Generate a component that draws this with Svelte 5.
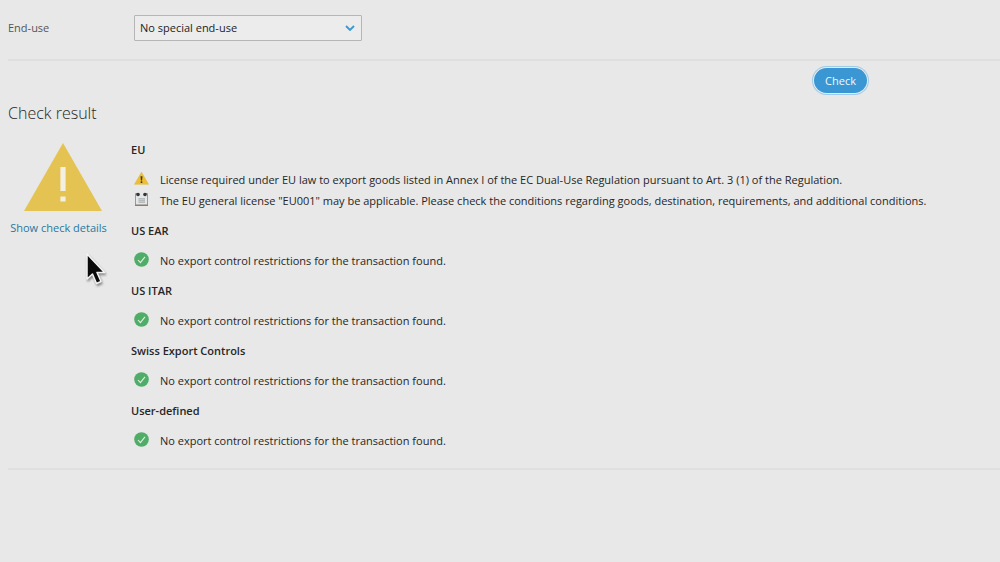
<script>
  const groups = [
    {
      title: 'EU',
      rows: [
        { icon: 'warning', text: 'License required under EU law to export goods listed in Annex I of the EC Dual-Use Regulation pursuant to Art. 3 (1) of the Regulation.' },
        { icon: 'note', text: 'The EU general license "EU001" may be applicable. Please check the conditions regarding goods, destination, requirements, and additional conditions.' }
      ]
    },
    ...['US EAR', 'US ITAR', 'Swiss Export Controls', 'User-defined'].map((title) => ({
      title,
      rows: [{ icon: 'ok', text: 'No export control restrictions for the transaction found.' }]
    }))
  ];
  let endUse = $state('No special end-use');
</script>

<main>
  <form onsubmit={(e) => e.preventDefault()}>
    <div class="field">
      <label for="end-use">End-use</label>
      <div class="select">
        <select id="end-use" bind:value={endUse}>
          <option>No special end-use</option>
        </select>
        <svg class="chevron" viewBox="0 0 10 6" aria-hidden="true">
          <path d="M1 1l4 4 4-4" fill="none" stroke="#3a97cf" stroke-width="1.8" />
        </svg>
      </div>
    </div>
    <div class="actions"><button type="submit">Check</button></div>
  </form>

  <section>
    <h1>Check result</h1>
    <div class="result">
      <aside>
        <svg class="alert" viewBox="0 0 78 68" role="img" aria-label="Warning">
          <path d="M39 0L78 68H0Z" fill="#e5c352" />
          <path d="M36.400 24h5.200v24h-5.200zM36.400 53.500h5.200v5h-5.200z" fill="#f3efe2" />
        </svg>
        <a href="#details">Show check details</a>
      </aside>
      <div class="groups">
        {#each groups as group}
          <div class="group">
            <h2>{group.title}</h2>
            <ul>
              {#each group.rows as row}
                <li>
                  {#if row.icon === 'warning'}
                    <svg viewBox="0 0 15 15" aria-hidden="true">
                      <path d="M7.500 1.200L14.500 13.300H.5Z" fill="#eebf35" stroke="#dfb43a" stroke-width=".5" stroke-linejoin="round" />
                      <path d="M6.500 5.200h2l-.4 4.300H6.900zM6.700 10.300h1.600v1.600H6.700z" fill="#41371d" />
                    </svg>
                  {:else if row.icon === 'note'}
                    <svg viewBox="0 0 15 15" aria-hidden="true">
                      <path d="M1.500 1.500h12v11.500h-12z" fill="#e4e6e7" stroke="#a3978a" />
                      <path d="M1 13.300h13" stroke="#786d61" />
                      <path d="M4.500 6h6.500v5H4.500z" fill="#b5babc" />
                      <path d="M5 7.500h5.500M5 9.500h5.500" stroke="#cdd1d2" stroke-width=".7" />
                      <path d="M5.200 1h4.600v1.500H5.200z" fill="#e8e8e8" />
                      <circle cx="4" cy="2.500" r="1.800" fill="#333537" />
                      <circle cx="11" cy="2.500" r="1.800" fill="#333537" />
                    </svg>
                  {:else}
                    <svg viewBox="0 0 15 15" aria-hidden="true">
                      <circle cx="7.500" cy="7.500" r="7.300" fill="#50ad67" />
                      <path d="M4 8l2.400 2.600L11 4.800" fill="none" stroke="#dff0e1" stroke-width="1.100" />
                    </svg>
                  {/if}
                  <span>{row.text}</span>
                </li>
              {/each}
            </ul>
          </div>
        {/each}
      </div>
    </div>
  </section>

  <svg class="cursor" viewBox="0 0 22 34" aria-hidden="true">
    <path d="M2 2V27L7.500 22L11.500 31.500L16 29.500L12 20.500H19.500Z" fill="#0a0a0a" stroke="#f4f4f4" stroke-width="1.500" stroke-linejoin="round" />
  </svg>
</main>

<style>
  :global(body) {
    margin: 0;
    background: #e8e8e8;
  }
  main {
    position: relative;
    padding: 15px 0 0 8px;
    font: 11px/20px "Open Sans", sans-serif;
    color: #262626;
  }
  .field {
    display: flex;
    align-items: center;
    padding-bottom: 18px;
    border-bottom: 2px solid #dfdfdf;
  }
  label {
    width: 126px;
    color: #555;
  }
  .select {
    position: relative;
    width: 228px;
  }
  select {
    display: block;
    width: 100%;
    height: 26px;
    padding: 0 24px 0 5px;
    appearance: none;
    border: 1px solid #b5b5b5;
    border-radius: 1px;
    background: #ececec;
    font: inherit;
    color: #1c1c1c;
  }
  .chevron {
    position: absolute;
    right: 7px;
    top: 10px;
    width: 10px;
    height: 6px;
    pointer-events: none;
  }
  .actions {
    display: flex;
    justify-content: flex-end;
    padding: 7px 133px 0 0;
  }
  button {
    height: 25px;
    padding: 0 11px;
    border: 0;
    border-radius: 13px;
    background: #3a97d3;
    box-shadow: 0 0 0 1px #e0edf4, 0 0 0 2px #9fcbe6;
    font: inherit;
    color: #f1f7fa;
  }
  section {
    padding-bottom: 17px;
    border-bottom: 2px solid #dfdfdf;
  }
  h1 {
    margin: 9px 0 0;
    font-size: 16px;
    line-height: 22px;
    font-weight: 300;
  }
  .result {
    display: flex;
    gap: 22px;
    padding-top: 16px;
  }
  aside {
    display: flex;
    flex: none;
    flex-direction: column;
    align-items: center;
    gap: 7px;
    width: 101px;
    padding-top: 3px;
  }
  .alert {
    width: 78px;
    height: 68px;
    margin-left: 8px;
  }
  a {
    color: #26789f;
    text-decoration: none;
    white-space: nowrap;
  }
  .groups {
    display: flex;
    flex-direction: column;
    gap: 10px;
  }
  h2 {
    margin: 0 0 9px;
    font-size: 11px;
    line-height: 20px;
    font-weight: 600;
  }
  ul {
    margin: 0;
    padding: 0;
    list-style: none;
  }
  li {
    display: flex;
    gap: 11px;
    padding-left: 3px;
    line-height: 21px;
  }
  li svg {
    flex: none;
    width: 15px;
    height: 15px;
    margin-top: 2px;
  }
  .cursor {
    position: absolute;
    left: 85px;
    top: 252px;
    width: 22px;
    height: 34px;
    filter: drop-shadow(1px 2px 1px #0006);
  }
</style>
